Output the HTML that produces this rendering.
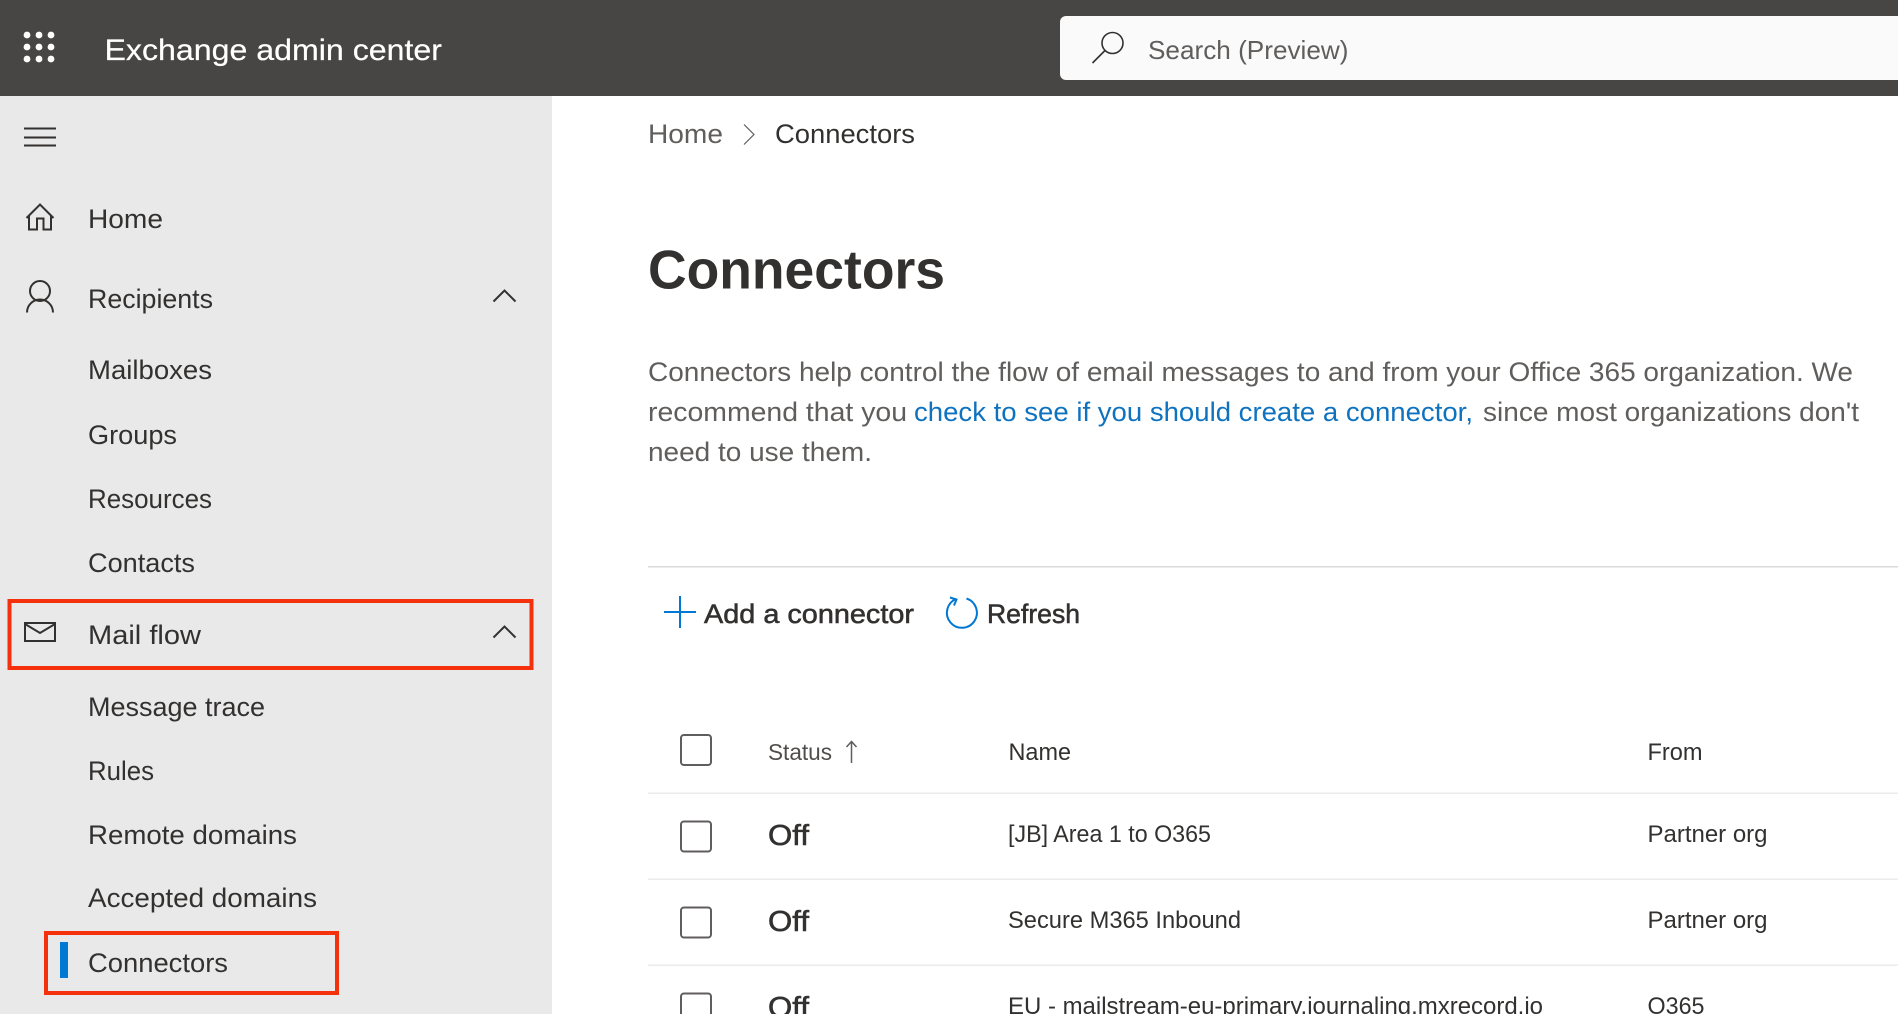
<!DOCTYPE html>
<html lang="en">
<head>
<meta charset="utf-8">
<title>Exchange admin center</title>
<style>
html,body{margin:0;padding:0;width:1898px;height:1014px;overflow:hidden;background:#fff}
svg{display:block}
text{font-family:"Liberation Sans",Arial,sans-serif;white-space:pre}
.nav{font-size:27px;fill:#323130}
.para{font-size:27px;fill:#605e5c}
.link{font-size:27px;fill:#0f72bf}
.cell{font-size:24px;fill:#323130}
.semi{font-size:27px;fill:#323130;stroke:#323130;stroke-width:.55}
.off{font-size:29px;fill:#323130;stroke:#323130;stroke-width:.6}
.head{font-size:23px;fill:#504e4c}
.ic{fill:none;stroke:#323130;stroke-width:2}
.cb{fill:#fff;stroke:#605e5c;stroke-width:2}
</style>
</head>
<body>
<svg width="1898" height="1014" viewBox="0 0 1898 1014" xmlns="http://www.w3.org/2000/svg">
<rect width="1898" height="1014" fill="#fff"/>
<rect x="0" y="96" width="552" height="918" fill="#e9e9e9"/>
<rect width="1898" height="96" fill="#484644"/>

<!-- waffle -->
<g fill="#fff">
<circle cx="27" cy="35" r="3.4"/><circle cx="39" cy="35" r="3.4"/><circle cx="51" cy="35" r="3.4"/>
<circle cx="27" cy="47" r="3.4"/><circle cx="39" cy="47" r="3.4"/><circle cx="51" cy="47" r="3.4"/>
<circle cx="27" cy="59" r="3.4"/><circle cx="39" cy="59" r="3.4"/><circle cx="51" cy="59" r="3.4"/>
</g>
<text x="104.500" y="60" font-size="30" fill="#fff" stroke="#fff" stroke-width=".2" textLength="337.500" lengthAdjust="spacingAndGlyphs">Exchange admin center</text>

<!-- search -->
<path d="M1898 16H1066a6 6 0 0 0-6 6v52a6 6 0 0 0 6 6h832z" fill="#fafafa"/>
<circle cx="1112.500" cy="43" r="10.500" fill="none" stroke="#323130" stroke-width="1.600"/>
<path d="M1105 50.500L1092.500 63" fill="none" stroke="#323130" stroke-width="1.600"/>
<text x="1148" y="59" font-size="26" fill="#605e5c" textLength="200.500" lengthAdjust="spacingAndGlyphs">Search (Preview)</text>

<!-- hamburger -->
<path d="M24 128.500H56M24 137.500H56M24 145.500H56" class="ic"/>

<!-- home -->
<path d="M26.500 218L40 204.500L53.500 218M29 215V229.500H37V218.500H43.500V229.500H51V215" class="ic"/>
<text class="nav" x="88" y="228" textLength="75" lengthAdjust="spacingAndGlyphs">Home</text>

<!-- recipients -->
<circle cx="40" cy="291" r="10" class="ic"/>
<path d="M27 312.500A13 13 0 0 1 53 312.500" class="ic"/>
<text class="nav" x="88" y="308" textLength="125" lengthAdjust="spacingAndGlyphs">Recipients</text>
<path d="M493.500 301.500L504.500 290.500L515.500 301.500" class="ic"/>

<text class="nav" x="88" y="379" textLength="124" lengthAdjust="spacingAndGlyphs">Mailboxes</text>
<text class="nav" x="88" y="444" textLength="89" lengthAdjust="spacingAndGlyphs">Groups</text>
<text class="nav" x="88" y="508" textLength="124" lengthAdjust="spacingAndGlyphs">Resources</text>
<text class="nav" x="88" y="572" textLength="107" lengthAdjust="spacingAndGlyphs">Contacts</text>

<!-- mail flow -->
<rect x="9.500" y="601" width="522" height="67" fill="none" stroke="#f4310c" stroke-width="4"/>
<rect x="25" y="623" width="30" height="18" class="ic"/>
<path d="M25 624L40 633L55 624" class="ic"/>
<text class="nav" x="88" y="644" textLength="113" lengthAdjust="spacingAndGlyphs">Mail flow</text>
<path d="M493.500 637.500L504.500 626.500L515.500 637.500" class="ic"/>

<text class="nav" x="88" y="716" textLength="177" lengthAdjust="spacingAndGlyphs">Message trace</text>
<text class="nav" x="88" y="780" textLength="66" lengthAdjust="spacingAndGlyphs">Rules</text>
<text class="nav" x="88" y="844" textLength="209" lengthAdjust="spacingAndGlyphs">Remote domains</text>
<text class="nav" x="88" y="907" textLength="229" lengthAdjust="spacingAndGlyphs">Accepted domains</text>

<!-- connectors -->
<rect x="46" y="933" width="291" height="60" fill="none" stroke="#f4310c" stroke-width="4"/>
<rect x="60" y="942" width="8" height="36" fill="#0078d4"/>
<text class="nav" x="88" y="972" textLength="140" lengthAdjust="spacingAndGlyphs">Connectors</text>

<!-- breadcrumb -->
<text x="648" y="143" font-size="27" fill="#605e5c" textLength="75" lengthAdjust="spacingAndGlyphs">Home</text>
<path d="M744 124.500L754 134.500L744 144.500" fill="none" stroke="#605e5c" stroke-width="1.200"/>
<text x="775" y="143" font-size="27" fill="#323130" textLength="140" lengthAdjust="spacingAndGlyphs">Connectors</text>

<!-- title -->
<text x="648" y="288.500" font-size="55" font-weight="700" fill="#323130" textLength="297" lengthAdjust="spacingAndGlyphs">Connectors</text>

<!-- paragraph -->
<text class="para" x="648" y="381" textLength="1205" lengthAdjust="spacingAndGlyphs">Connectors help control the flow of email messages to and from your Office 365 organization. We</text>
<text class="para" x="648" y="421" textLength="259" lengthAdjust="spacingAndGlyphs">recommend that you</text>
<text class="link" x="914" y="421" textLength="559" lengthAdjust="spacingAndGlyphs">check to see if you should create a connector,</text>
<text class="para" x="1483" y="421" textLength="376" lengthAdjust="spacingAndGlyphs">since most organizations don't</text>
<text class="para" x="648" y="461" textLength="224" lengthAdjust="spacingAndGlyphs">need to use them.</text>

<rect x="648" y="566" width="1250" height="1.500" fill="#dcdad8"/>

<!-- toolbar -->
<path d="M664 612H696M680 596V628" fill="none" stroke="#0078d4" stroke-width="2"/>
<text class="semi" x="704" y="623" textLength="210" lengthAdjust="spacingAndGlyphs">Add a connector</text>
<path d="M966.500 598.500A15 15 0 1 1 956 599" fill="none" stroke="#0078d4" stroke-width="2"/>
<path d="M950 597.500L956.500 599.500L954 605.500" fill="none" stroke="#0078d4" stroke-width="2"/>
<text class="semi" x="987" y="623" textLength="93" lengthAdjust="spacingAndGlyphs">Refresh</text>

<!-- table head -->
<rect x="681" y="735" width="30" height="30" rx="3" class="cb"/>
<text class="head" x="768" y="760" textLength="64" lengthAdjust="spacingAndGlyphs">Status</text>
<path d="M851.500 763V742M846.500 747L851.500 741.500L856.500 747" fill="none" stroke="#605e5c" stroke-width="1.500"/>
<text class="cell" x="1008.500" y="760" font-size="23" textLength="62.500" lengthAdjust="spacingAndGlyphs">Name</text>
<text class="cell" x="1647.500" y="760" textLength="55" lengthAdjust="spacingAndGlyphs">From</text>
<rect x="648" y="792.500" width="1250" height="1.500" fill="#edebe9"/>

<!-- row 1 -->
<rect x="681" y="821.500" width="30" height="30" rx="3" class="cb"/>
<text class="off" x="768" y="845" textLength="41" lengthAdjust="spacingAndGlyphs">Off</text>
<text class="cell" x="1008" y="842" textLength="203" lengthAdjust="spacingAndGlyphs">[JB] Area 1 to O365</text>
<text class="cell" x="1647.500" y="842" textLength="120" lengthAdjust="spacingAndGlyphs">Partner org</text>
<rect x="648" y="878.500" width="1250" height="1.500" fill="#edebe9"/>

<!-- row 2 -->
<rect x="681" y="907.500" width="30" height="30" rx="3" class="cb"/>
<text class="off" x="768" y="931" textLength="41" lengthAdjust="spacingAndGlyphs">Off</text>
<text class="cell" x="1008" y="928" textLength="233" lengthAdjust="spacingAndGlyphs">Secure M365 Inbound</text>
<text class="cell" x="1647.500" y="928" textLength="120" lengthAdjust="spacingAndGlyphs">Partner org</text>
<rect x="648" y="964.500" width="1250" height="1.500" fill="#edebe9"/>

<!-- row 3 -->
<rect x="681" y="993.500" width="30" height="30" rx="3" class="cb"/>
<text class="off" x="768" y="1017" textLength="41" lengthAdjust="spacingAndGlyphs">Off</text>
<text class="cell" x="1008" y="1014" textLength="535" lengthAdjust="spacingAndGlyphs">EU - mailstream-eu-primary.journaling.mxrecord.io</text>
<text class="cell" x="1647.500" y="1014" textLength="57" lengthAdjust="spacingAndGlyphs">O365</text>
</svg>
</body>
</html>
